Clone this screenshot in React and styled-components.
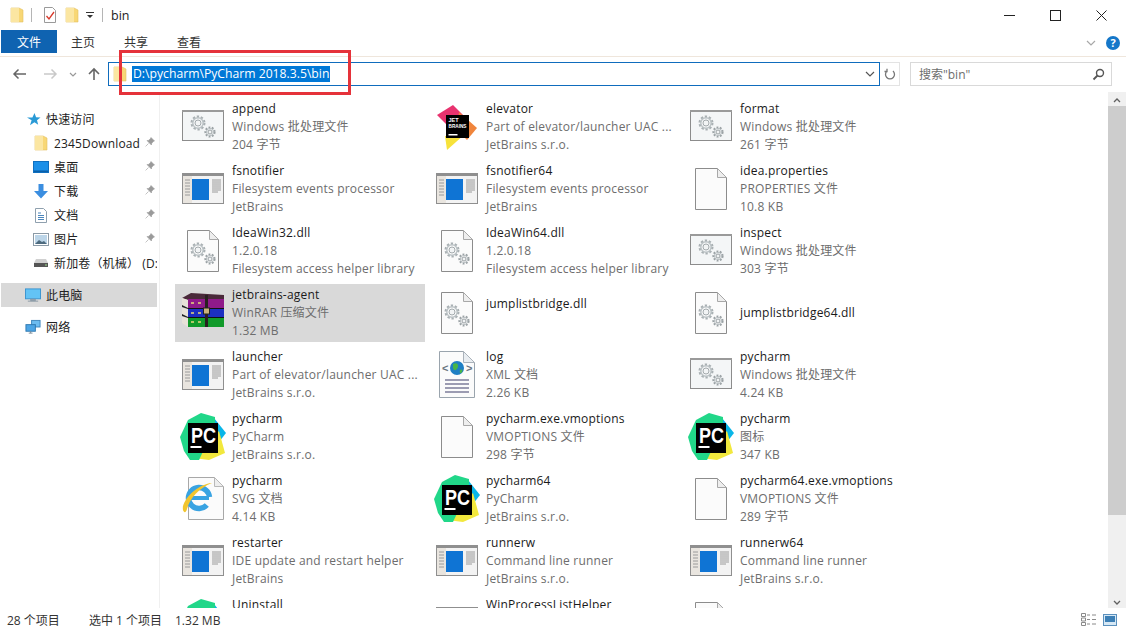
import styled, { createGlobalStyle } from "styled-components";

const Global = createGlobalStyle`
	html, body {
		margin: 0;
		padding: 0;
		background: #fff;
	}
	body {
		font-family: "Open Sans", "Noto Sans CJK SC", sans-serif;
		font-size: 12px;
		color: #1a1a1a;
	}
`;

const S = {
	Window: styled.div`
		position: relative;
		width: 1126px;
		height: 632px;
		display: flex;
		flex-direction: column;
		overflow: hidden;
		background: #fff;
	`,

	Gap: styled.span`
		width: ${(p) => p.$w}px;
		flex: none;
	`,

	TitleBar: styled.div`
		height: 30px;
		display: flex;
		align-items: center;
		padding-right: 2px;
	`,
	QuickTools: styled.div`
		display: flex;
		align-items: center;
		padding-left: 10px;
		flex: 1;
	`,
	Sep: styled.div`
		width: 1px;
		height: 14px;
		background: #b5b5b5;
		margin: ${(p) => p.$margin};
	`,
	TitleText: styled.span`
		font-size: 12.5px;
		color: #222;
	`,
	WinButton: styled.div`
		width: 46px;
		height: 30px;
		display: flex;
		align-items: center;
		justify-content: center;
	`,

	TabBar: styled.div`
		height: 26px;
		display: flex;
		align-items: flex-start;
		padding-left: 1px;
		border-bottom: 1px solid #efe6dc;
		box-sizing: content-box;
	`,
	FileTab: styled.div`
		width: 56px;
		height: 23px;
		background: #0f63b1;
		color: #fff;
		display: flex;
		align-items: center;
		justify-content: center;
		font-size: 12px;
	`,
	Tab: styled.div`
		width: ${(p) => p.$w}px;
		height: 23px;
		display: flex;
		align-items: center;
		justify-content: center;
		padding-top: 1px;
		box-sizing: border-box;
		color: #333;
	`,
	TabSpacer: styled.div`
		flex: 1;
	`,
	RibbonRight: styled.div`
		display: flex;
		align-items: center;
		gap: 10px;
		padding: 6px 6px 0 0;
	`,
	Help: styled.div`
		width: 14px;
		height: 14px;
		border-radius: 50%;
		background: #1577c9;
		color: #fff;
		font-size: 11px;
		font-weight: 700;
		line-height: 14px;
		text-align: center;
	`,

	AddressRow: styled.div`
		height: 35px;
		display: flex;
		align-items: flex-start;
		padding-top: 5px;
		box-sizing: border-box;
	`,
	Nav: styled.div`
		width: 108px;
		height: 24px;
		display: flex;
		align-items: center;
		padding-left: 12px;
		box-sizing: border-box;
	`,
	AddressBox: styled.div`
		width: 772px;
		height: 24px;
		border: 1px solid #0f6cbd;
		box-sizing: border-box;
		display: flex;
		align-items: center;
		padding-left: 4px;
	`,
	Selected: styled.span`
		background: #0078d7;
		color: #fff;
		height: 16px;
		line-height: 16px;
		margin-left: 5px;
		padding: 0 1px;
		font-size: 12.2px;
		white-space: nowrap;
	`,
	AddressEnd: styled.div`
		margin-left: auto;
		padding-right: 4px;
		display: flex;
	`,
	Refresh: styled.div`
		width: 20px;
		height: 24px;
		border: 1px solid #e3e3e3;
		border-left: none;
		box-sizing: border-box;
		display: flex;
		align-items: center;
		justify-content: center;
	`,
	SearchBox: styled.div`
		width: 202px;
		height: 24px;
		margin-left: 10px;
		border: 1px solid #d9d9d9;
		box-sizing: border-box;
		display: flex;
		align-items: center;
		justify-content: space-between;
		padding: 0 6px 0 8px;
		color: #6d6d6d;
	`,

	Main: styled.div`
		flex: 1;
		min-height: 0;
		display: flex;
	`,
	Sidebar: styled.div`
		width: 158px;
		border-right: 1px solid #f0f0f0;
		padding: 15px 0 0 1px;
		box-sizing: content-box;
		flex: none;
		overflow: hidden;
	`,
	NavItem: styled.div`
		position: relative;
		width: 156px;
		height: 24px;
		display: flex;
		align-items: center;
		padding-left: ${(p) => p.$indent}px;
		box-sizing: border-box;
		margin-top: ${(p) => p.$top || 0}px;
		background: ${(p) => (p.$active ? "#d9d9d9" : "transparent")};
		white-space: nowrap;
		color: #222;
		letter-spacing: 0.15px;
		overflow: hidden;
	`,
	NavIcon: styled.span`
		width: 16px;
		height: 16px;
		flex: none;
		margin-right: ${(p) => p.$gap}px;
		display: flex;
		align-items: center;
		justify-content: center;
	`,
	Pin: styled.span`
		position: absolute;
		right: 2px;
		top: 6px;
		display: flex;
	`,

	Files: styled.div`
		flex: 1;
		min-width: 0;
		padding: 6px 0 0 15px;
		overflow: hidden;
		display: grid;
		grid-template-columns: repeat(3, 250px);
		grid-auto-rows: 58px;
		column-gap: 4px;
		row-gap: 4px;
	`,
	File: styled.div`
		display: flex;
		align-items: center;
		padding-left: 4px;
		background: ${(p) => (p.$selected ? "#d9d9d9" : "transparent")};
		min-width: 0;
	`,
	FileIcon: styled.div`
		width: 48px;
		height: 48px;
		flex: none;
		margin-right: 5px;
	`,
	FileText: styled.div`
		display: flex;
		flex-direction: column;
		min-width: 0;
		line-height: 18px;
		letter-spacing: 0.2px;
	`,
	FileName: styled.div`
		height: 18px;
		color: #1a1a1a;
		white-space: nowrap;
	`,
	FileMeta: styled.div`
		height: 18px;
		color: #6d6d6d;
		white-space: nowrap;
	`,

	Scrollbar: styled.div`
		width: 18px;
		flex: none;
		background: #f0f0f0;
		display: flex;
		flex-direction: column;
		align-items: center;
	`,
	ScrollArrow: styled.div`
		height: 11px;
		flex: none;
		display: flex;
		align-items: center;
		justify-content: center;
		padding-top: ${(p) => p.$top || 0}px;
	`,
	Thumb: styled.div`
		width: 100%;
		height: 409px;
		background: #cdcdcd;
		flex: none;
	`,
	ScrollRest: styled.div`
		flex: 1;
	`,

	StatusBar: styled.div`
		height: 24px;
		flex: none;
		display: flex;
		align-items: center;
		padding-left: 7px;
		color: #333;
	`,
	StatusText: styled.span`
		width: ${(p) => p.$w}px;
		flex: none;
	`,
	StatusIcons: styled.div`
		margin-left: auto;
		display: flex;
		align-items: center;
		gap: 6px;
		padding-right: 9px;
	`,

	RedBox: styled.div`
		position: absolute;
		left: 119px;
		top: 50px;
		width: 232px;
		height: 45px;
		border: 3px solid #e5323a;
		box-sizing: border-box;
		pointer-events: none;
	`,
};

const SmallFolder = () => (
	<svg width="14" height="16" viewBox="0 0 14 16">
		<path d="M1 1h8l4 2v12H1z" fill="#f8d775" stroke="#e3bf62" strokeWidth="0.6" />
		<path d="M1 1h8v14H1z" fill="#fbe6a2" />
	</svg>
);

const CheckDoc = () => (
	<svg width="14" height="16" viewBox="0 0 14 16">
		<path d="M1.500.500h8l3 3v12h-11z" fill="#fff" stroke="#9a9a9a" />
		<path d="M3.500 9l2.500 3 5-7" fill="none" stroke="#d8392b" strokeWidth="1.300" />
	</svg>
);

const Pin = () => (
	<svg width="10" height="10" viewBox="0 0 10 10">
		<path d="M6 .5l3.500 3.500-1.300.6L6.600 6.500 6.400 8 2 3.600l1.500-.2L5.400 1.800zM3.500 6.500L.6 9.400" fill="#9a9a9a" stroke="#9a9a9a" strokeWidth="0.6" />
	</svg>
);

const StarIcon = () => (
	<svg width="15" height="15" viewBox="0 0 15 15">
		<path d="M8.500 1l1.600 4.300 4.400.2-3.500 2.800 1.200 4.500-3.800-2.500-4.400 3 1.600-5L1 5.600l5.400-.2z" fill="#2a9ad6" />
	</svg>
);

const DesktopIcon = () => (
	<svg width="16" height="12" viewBox="0 0 16 12">
		<rect x="0.500" y="0.500" width="15" height="11" fill="#1b8fe8" stroke="#0f6fc0" />
		<rect x="1" y="9.500" width="14" height="1.500" fill="#0a5fa8" />
	</svg>
);

const DownloadIcon = () => (
	<svg width="16" height="16" viewBox="0 0 16 16">
		<path d="M5.500 1h5v7H15l-7 7.500L1 8h4.500z" fill="#3b8ee0" />
	</svg>
);

const DocIcon = () => (
	<svg width="12" height="15" viewBox="0 0 12 15">
		<path d="M.5.500h8l3 3v11H.5z" fill="#fff" stroke="#8fa0ae" />
		<path d="M3 5h3M3 7.500h6M3 9.500h6M3 11.500h6" stroke="#4a86bd" strokeWidth="1" />
	</svg>
);

const PictureIcon = () => (
	<svg width="16" height="13" viewBox="0 0 16 13">
		<rect x="0.500" y="0.500" width="15" height="12" fill="#fff" stroke="#8b9aa6" />
		<rect x="2" y="2" width="12" height="9" fill="#bcd5e8" />
		<path d="M2 11l4-4 3 2 2-1 3 3z" fill="#4d6a7e" />
	</svg>
);

const DriveIcon = () => (
	<svg width="14" height="8" viewBox="0 0 14 8">
		<path d="M2 0h10l2 4v4H0V4z" fill="#d0d0d0" />
		<rect y="4" width="14" height="4" fill="#555" />
		<rect x="11" y="5.500" width="2" height="1" fill="#9fe08f" />
	</svg>
);

const PcIcon = () => (
	<svg width="17" height="15" viewBox="0 0 17 15">
		<rect x="0.500" y="0.500" width="16" height="10.500" fill="#63c3f5" stroke="#3a93cf" />
		<path d="M6 11.500h5v1.500H6zM3 13.500h11" stroke="#8a99a5" fill="#9fb0bc" />
	</svg>
);

const NetworkIcon = () => (
	<svg width="17" height="16" viewBox="0 0 17 16">
		<rect x="7" y="1" width="9" height="7" fill="#6dbcf0" stroke="#3f86bd" />
		<rect x="1" y="5.500" width="10" height="7" fill="#4da5e5" stroke="#2e78b0" />
		<path d="M4 14.500h4M6 12.500v2" stroke="#7a8a96" />
	</svg>
);

const Gears = ({ x, y }) => (
	<g transform={`translate(${x} ${y})`} fill="none">
		<circle cx="8" cy="8" r="6.200" stroke="#a9b0b3" strokeWidth="2.600" strokeDasharray="2.200 1.700" />
		<circle cx="8" cy="8" r="5.200" stroke="#bcc3c6" strokeWidth="1.400" />
		<circle cx="8" cy="8" r="3" fill="#f2f4f5" stroke="#a3aaad" />
		<circle cx="20" cy="17" r="4.500" stroke="#9aa1a4" strokeWidth="2.200" strokeDasharray="1.800 1.400" />
		<circle cx="20" cy="17" r="3.600" stroke="#b8bfc2" strokeWidth="1" />
		<circle cx="20" cy="17" r="2" fill="#f2f4f5" stroke="#9aa1a4" />
	</g>
);

const BatIcon = () => (
	<svg width="48" height="48" viewBox="0 0 48 48">
		<rect x="3.500" y="7.500" width="41" height="30" fill="#f4f6f7" stroke="#8c8c8c" />
		<rect x="3" y="7" width="42" height="2" fill="#9a9a9a" />
		<Gears x={11} y={12} />
	</svg>
);

const ExeIcon = () => (
	<svg width="48" height="48" viewBox="0 0 48 48">
		<rect x="3.500" y="8.500" width="41" height="30" fill="#f3f3f3" stroke="#8f8f8f" />
		<rect x="3" y="8" width="42" height="3" fill="#8f8f8f" />
		<rect x="4" y="11" width="9" height="27" fill="#e9e5df" />
		<rect x="13" y="14" width="17" height="21" fill="#0f74d4" />
		<path d="M33 15h9M33 17h9M33 19h9M33 21h9M33 23h9M33 25h9M33 27h6M6 15h5M6 18h5M6 21h5M6 24h5M6 27h5M6 30h5" stroke="#9a9a9a" />
	</svg>
);

const PageOutline = () => (
	<>
		<path d="M8.500 3.500h22l9 9v32h-31z" fill="#fbfbfb" stroke="#8c8c8c" />
		<path d="M30.500 3.500v9h9z" fill="#eee" stroke="#a8a8a8" />
	</>
);

const DllIcon = () => (
	<svg width="48" height="48" viewBox="0 0 48 48">
		<PageOutline />
		<Gears x={11} y={15} />
	</svg>
);

const BlankIcon = () => (
	<svg width="48" height="48" viewBox="0 0 48 48">
		<PageOutline />
	</svg>
);

const JetBrainsIcon = () => (
	<svg width="48" height="48" viewBox="0 0 48 48">
		<path d="M4 12L20 2l12 12-16 10z" fill="#e8336f" />
		<path d="M26 9l18 16-10 12-10-10z" fill="#f0853c" />
		<path d="M14 47l-2-14 20-2z" fill="#f7e23a" />
		<rect x="13" y="12" width="23" height="23" fill="#000" />
		<text x="15.500" y="19" fontSize="5.500" fontWeight="800" fill="#fff" fontFamily="Liberation Sans">JET</text>
		<text x="15.500" y="25" fontSize="5.500" fontWeight="800" fill="#fff" fontFamily="Liberation Sans" textLength="18" lengthAdjust="spacingAndGlyphs">BRAINS</text>
		<rect x="15.500" y="31" width="9" height="1.500" fill="#fff" />
	</svg>
);

const PyCharmIcon = () => (
	<svg width="48" height="48" viewBox="0 0 48 48">
		<path d="M35 5l12 15-7 9-8-14z" fill="#09b6e8" />
		<path d="M40 18l6 22-16 7-16-2z" fill="#f2e83d" />
		<path d="M1 24L9 7l13-7 14 4v9L20 47l-9 0-6-9z" fill="#21d789" />
		<rect x="9" y="10" width="30" height="30" fill="#000" />
		<text x="12" y="30" fontSize="22" fontWeight="700" fill="#fff" fontFamily="Liberation Sans" textLength="25" lengthAdjust="spacingAndGlyphs">PC</text>
		<rect x="11.500" y="33" width="11" height="2" fill="#fff" />
	</svg>
);

const WinRarIcon = () => (
	<svg width="48" height="48" viewBox="0 0 48 48">
		<path d="M3 9l9-5 33 2v5H9z" fill="#4a2a3a" />
		<path d="M3 9l6 2v8l-6-3z" fill="#e7e2d8" />
		<rect x="9" y="10" width="36" height="9" fill="#8f1a8a" />
		<path d="M3 19l6 1v8l-6-3z" fill="#e7e2d8" />
		<path d="M3 16l6 3v1l-6-2z" fill="#222" />
		<rect x="9" y="20" width="36" height="8" fill="#1c2fc0" />
		<path d="M3 28l6 1v9l-6-4z" fill="#e7e2d8" />
		<path d="M3 25l6 3v1l-6-2z" fill="#222" />
		<rect x="9" y="29" width="36" height="9" fill="#119a2a" />
		<path d="M12 14h14M12 24h14M12 33h14" stroke="#e8d77a" strokeWidth="1.500" strokeDasharray="3 4" />
		<path d="M9 19.500h36M9 28.500h36" stroke="#111" />
		<rect x="26" y="6" width="3" height="32" fill="#2a2020" />
		<rect x="24.500" y="19" width="6" height="6" fill="#c9b27a" stroke="#222" />
	</svg>
);

const XmlIcon = () => (
	<svg width="48" height="48" viewBox="0 0 48 48">
		<path d="M6.500.500h24l11 11v35h-35z" fill="#fbfbfb" stroke="#9aa4ad" />
		<path d="M30.500.500v11h11z" fill="#e9edf1" stroke="#aab2ba" />
		<circle cx="24" cy="17" r="7" fill="#1f7fc4" />
		<path d="M20 13c3-2 6 0 5 3s-4 5-5 1zM27 19c2-1 3 0 2 2s-3 2-2-2z" fill="#48b548" />
		<text x="9" y="21" fontSize="11" fontWeight="700" fill="#6a7580" fontFamily="Liberation Sans">&lt;</text>
		<text x="33" y="21" fontSize="11" fontWeight="700" fill="#6a7580" fontFamily="Liberation Sans">&gt;</text>
		<path d="M12 29h24M12 33h24M12 37h24M12 41h24" stroke="#7d7d9a" strokeWidth="1.500" />
	</svg>
);

const IeIcon = () => (
	<svg width="48" height="48" viewBox="0 0 48 48">
		<path d="M9.500 2.500h26l9 9v33h-35z" fill="#fbfbfb" stroke="#a8a8a8" />
		<path d="M35.500 2.500v9h9z" fill="#eee" stroke="#b8b8b8" />
		<circle cx="20" cy="23" r="10.500" fill="none" stroke="#39a3e2" strokeWidth="5.500" strokeDasharray="57 9" transform="rotate(42 20 23)" />
		<rect x="11" y="21" width="19" height="4" fill="#39a3e2" />
		<path d="M4 35C2 26 18 9 33 8c-13 5-22 15-25 26-1 4-3 4-4 1z" fill="#f2c52e" />
	</svg>
);

const icons = {
	bat: BatIcon,
	exe: ExeIcon,
	dll: DllIcon,
	blank: BlankIcon,
	jb: JetBrainsIcon,
	pc: PyCharmIcon,
	rar: WinRarIcon,
	xml: XmlIcon,
	ie: IeIcon,
};

const files = [
	{ icon: "bat", name: "append", lines: ["Windows 批处理文件", "204 字节"] },
	{ icon: "jb", name: "elevator", lines: ["Part of elevator/launcher UAC ...", "JetBrains s.r.o."] },
	{ icon: "bat", name: "format", lines: ["Windows 批处理文件", "261 字节"] },
	{ icon: "exe", name: "fsnotifier", lines: ["Filesystem events processor", "JetBrains"] },
	{ icon: "exe", name: "fsnotifier64", lines: ["Filesystem events processor", "JetBrains"] },
	{ icon: "blank", name: "idea.properties", lines: ["PROPERTIES 文件", "10.8 KB"] },
	{ icon: "dll", name: "IdeaWin32.dll", lines: ["1.2.0.18", "Filesystem access helper library"] },
	{ icon: "dll", name: "IdeaWin64.dll", lines: ["1.2.0.18", "Filesystem access helper library"] },
	{ icon: "bat", name: "inspect", lines: ["Windows 批处理文件", "303 字节"] },
	{ icon: "rar", name: "jetbrains-agent", lines: ["WinRAR 压缩文件", "1.32 MB"], selected: true },
	{ icon: "dll", name: "jumplistbridge.dll", lines: [""] },
	{ icon: "dll", name: "jumplistbridge64.dll", lines: [] },
	{ icon: "exe", name: "launcher", lines: ["Part of elevator/launcher UAC ...", "JetBrains s.r.o."] },
	{ icon: "xml", name: "log", lines: ["XML 文档", "2.26 KB"] },
	{ icon: "bat", name: "pycharm", lines: ["Windows 批处理文件", "4.24 KB"] },
	{ icon: "pc", name: "pycharm", lines: ["PyCharm", "JetBrains s.r.o."] },
	{ icon: "blank", name: "pycharm.exe.vmoptions", lines: ["VMOPTIONS 文件", "298 字节"] },
	{ icon: "pc", name: "pycharm", lines: ["图标", "347 KB"] },
	{ icon: "ie", name: "pycharm", lines: ["SVG 文档", "4.14 KB"] },
	{ icon: "pc", name: "pycharm64", lines: ["PyCharm", "JetBrains s.r.o."] },
	{ icon: "blank", name: "pycharm64.exe.vmoptions", lines: ["VMOPTIONS 文件", "289 字节"] },
	{ icon: "exe", name: "restarter", lines: ["IDE update and restart helper", "JetBrains"] },
	{ icon: "exe", name: "runnerw", lines: ["Command line runner", "JetBrains s.r.o."] },
	{ icon: "exe", name: "runnerw64", lines: ["Command line runner", "JetBrains s.r.o."] },
	{ icon: "pc", name: "Uninstall", lines: ["", ""] },
	{ icon: "exe", name: "WinProcessListHelper", lines: ["", ""] },
	{ icon: "blank", name: "yjpagent.dll", lines: [""] },
];

const quickAccess = [
	{ icon: <SmallFolder />, label: "2345Download", pin: true },
	{ icon: <DesktopIcon />, label: "桌面", pin: true },
	{ icon: <DownloadIcon />, label: "下载", pin: true },
	{ icon: <DocIcon />, label: "文档", pin: true },
	{ icon: <PictureIcon />, label: "图片", pin: true },
	{ icon: <DriveIcon />, label: "新加卷（机械） (D:" },
];

export default function App() {
	return (
		<S.Window>
			<Global />
			<S.TitleBar>
				<S.QuickTools>
					<SmallFolder />
					<S.Sep $margin="0 11px 0 7px" />
					<CheckDoc />
					<S.Gap $w={8} />
					<SmallFolder />
					<S.Gap $w={7} />
					<svg width="8" height="8" viewBox="0 0 8 8">
						<path d="M0 1h8v1H0zM1 4h6L4 7z" fill="#333" />
					</svg>
					<S.Sep $margin="0 8px 0 8px" />
					<S.TitleText>bin</S.TitleText>
				</S.QuickTools>
				<S.WinButton>
					<svg width="11" height="11" viewBox="0 0 11 11"><path d="M0 5.500h11" stroke="#222" /></svg>
				</S.WinButton>
				<S.WinButton>
					<svg width="11" height="11" viewBox="0 0 11 11"><rect x="0.500" y="0.500" width="10" height="10" fill="none" stroke="#222" /></svg>
				</S.WinButton>
				<S.WinButton>
					<svg width="11" height="11" viewBox="0 0 11 11"><path d="M.5.500l10 10M10.500.500l-10 10" stroke="#222" /></svg>
				</S.WinButton>
			</S.TitleBar>

			<S.TabBar>
				<S.FileTab>文件</S.FileTab>
				<S.Tab $w={52}>主页</S.Tab>
				<S.Tab $w={54}>共享</S.Tab>
				<S.Tab $w={52}>查看</S.Tab>
				<S.TabSpacer />
				<S.RibbonRight>
					<svg width="10" height="6" viewBox="0 0 10 6"><path d="M1 1l4 4 4-4" fill="none" stroke="#a8a8a8" strokeWidth="1.200" /></svg>
					<S.Help>?</S.Help>
				</S.RibbonRight>
			</S.TabBar>

			<S.AddressRow>
				<S.Nav>
					<svg width="16" height="12" viewBox="0 0 16 12"><path d="M14 6H2M6.500 1.500L2 6l4.500 4.500" fill="none" stroke="#666" strokeWidth="1.500" /></svg>
					<S.Gap $w={14} />
					<svg width="16" height="12" viewBox="0 0 16 12"><path d="M2 6h12M9.500 1.500L14 6l-4.500 4.500" fill="none" stroke="#c9c9c9" strokeWidth="1.500" /></svg>
					<S.Gap $w={11} />
					<svg width="8" height="5" viewBox="0 0 8 5"><path d="M1 1l3 3 3-3" fill="none" stroke="#999" strokeWidth="1.200" /></svg>
					<S.Gap $w={10} />
					<svg width="14" height="14" viewBox="0 0 14 14"><path d="M7 13V2M2 7l5-5 5 5" fill="none" stroke="#666" strokeWidth="1.600" /></svg>
				</S.Nav>
				<S.AddressBox>
					<SmallFolder />
					<S.Selected>D:\pycharm\PyCharm 2018.3.5\bin</S.Selected>
					<S.AddressEnd>
						<svg width="10" height="6" viewBox="0 0 10 6"><path d="M1 1l4 4 4-4" fill="none" stroke="#555" strokeWidth="1.200" /></svg>
					</S.AddressEnd>
				</S.AddressBox>
				<S.Refresh>
					<svg width="12" height="13" viewBox="0 0 12 13"><path d="M3 3a4.500 4.500 0 1 0 6 0M3 .8V3.500H.5" fill="none" stroke="#777" strokeWidth="1.300" /></svg>
				</S.Refresh>
				<S.SearchBox>
					<span>搜索"bin"</span>
					<svg width="13" height="13" viewBox="0 0 13 13"><circle cx="8" cy="5" r="3.500" fill="none" stroke="#555" strokeWidth="1.400" /><path d="M5.500 7.500L1.500 11.500" stroke="#555" strokeWidth="1.800" /></svg>
				</S.SearchBox>
			</S.AddressRow>

			<S.Main>
				<S.Sidebar>
					<S.NavItem $indent={24}>
						<S.NavIcon $gap={5}><StarIcon /></S.NavIcon>快速访问
					</S.NavItem>
					{quickAccess.map((item, i) => (
						<S.NavItem key={i} $indent={32}>
							<S.NavIcon $gap={5}>{item.icon}</S.NavIcon>
							{item.label}
							{item.pin && <S.Pin><Pin /></S.Pin>}
						</S.NavItem>
					))}
					<S.NavItem $indent={24} $top={8} $active>
						<S.NavIcon $gap={5}><PcIcon /></S.NavIcon>此电脑
					</S.NavItem>
					<S.NavItem $indent={24} $top={8}>
						<S.NavIcon $gap={5}><NetworkIcon /></S.NavIcon>网络
					</S.NavItem>
				</S.Sidebar>

				<S.Files>
					{files.map((file, i) => {
						const Icon = icons[file.icon];
						return (
							<S.File key={i} $selected={file.selected}>
								<S.FileIcon><Icon /></S.FileIcon>
								<S.FileText>
									<S.FileName>{file.name}</S.FileName>
									{file.lines.map((line, j) => (
										<S.FileMeta key={j}>{line}</S.FileMeta>
									))}
								</S.FileText>
							</S.File>
						);
					})}
				</S.Files>

				<S.Scrollbar>
					<S.ScrollArrow $top={3}>
						<svg width="8" height="5" viewBox="0 0 8 5"><path d="M1 4l3-3 3 3" fill="none" stroke="#606060" strokeWidth="1.300" /></svg>
					</S.ScrollArrow>
					<S.Thumb />
					<S.ScrollRest />
					<S.ScrollArrow>
						<svg width="8" height="5" viewBox="0 0 8 5"><path d="M1 1l3 3 3-3" fill="none" stroke="#606060" strokeWidth="1.300" /></svg>
					</S.ScrollArrow>
				</S.Scrollbar>
			</S.Main>

			<S.StatusBar>
				<S.StatusText $w={82}>28 个项目</S.StatusText>
				<S.StatusText $w={86}>选中 1 个项目</S.StatusText>
				<S.StatusText $w={60}>1.32 MB</S.StatusText>
				<S.StatusIcons>
					<svg width="16" height="14" viewBox="0 0 16 14"><path d="M.5.500h4v3h-4zM.5 5h4v3h-4zM.5 9.500h4v3h-4z" fill="none" stroke="#8a8a8a" /><path d="M6 2h3M11 2h4M6 6.500h3M11 6.500h4M6 11h3M11 11h4" stroke="#8a8a8a" /></svg>
					<svg width="14" height="12" viewBox="0 0 14 12"><rect x="0.500" y="0.500" width="13" height="11" fill="#d6e8f5" stroke="#5b90bd" /><rect x="2" y="2" width="10" height="6" fill="#3c7fb5" /></svg>
				</S.StatusIcons>
			</S.StatusBar>

			<S.RedBox />
		</S.Window>
	);
}
